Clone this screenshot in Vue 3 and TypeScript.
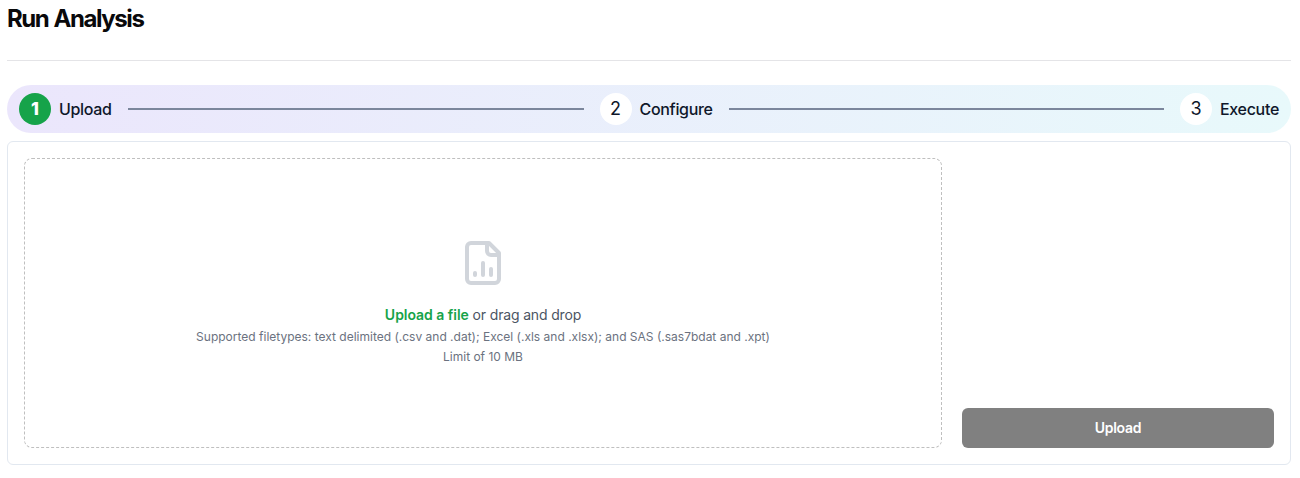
<script setup lang="ts">
interface Step {
  id: number
  label: string
  active: boolean
}

const steps: Step[] = [
  { id: 1, label: 'Upload', active: true },
  { id: 2, label: 'Configure', active: false },
  { id: 3, label: 'Execute', active: false },
]
</script>

<template>
  <main class="page">
    <h1 class="title">Run Analysis</h1>
    <div class="rule"></div>
    <nav class="stepper">
      <div v-for="(step, i) in steps" :key="step.id" class="step">
        <span class="num" :class="{ active: step.active }">{{ step.id }}</span>
        <span class="label">{{ step.label }}</span>
        <span v-if="i < steps.length - 1" class="line"></span>
      </div>
    </nav>
    <section class="panel">
      <div class="dropzone">
        <svg class="icon" viewBox="0 0 24 24" fill="none" stroke="currentColor" stroke-width="2" stroke-linecap="round" stroke-linejoin="round">
          <path d="M15 2H6a2 2 0 0 0-2 2v16a2 2 0 0 0 2 2h12a2 2 0 0 0 2-2V7Z" />
          <path d="M14 2v4a2 2 0 0 0 2 2h4" />
          <path d="M8 18v-1" />
          <path d="M12 18v-6" />
          <path d="M16 18v-3" />
        </svg>
        <p class="prompt"><span class="link">Upload a file</span> or drag and drop</p>
        <p class="hint">Supported filetypes: text delimited (.csv and .dat); Excel (.xls and .xlsx); and SAS (.sas7bdat and .xpt)</p>
        <p class="hint">Limit of 10 MB</p>
      </div>
      <div class="side">
        <button class="upload" type="button">Upload</button>
      </div>
    </section>
  </main>
</template>

<style>
body {
  background: #fff;
}
</style>

<style scoped>
* {
  box-sizing: border-box;
}
.page {
  height: 478px;
  padding: 0 9px 0 7px;
  font-family: Inter, sans-serif;
  color: #0f172a;
  overflow: hidden;
}
.title {
  margin: 0;
  padding-top: 3px;
  height: 60px;
  font-size: 24px;
  line-height: 32px;
  font-weight: 700;
  letter-spacing: -1.42px;
  word-spacing: 0.8px;
  color: #09090b;
}
.rule {
  height: 1px;
  background: #e4e4e7;
}
.stepper {
  display: flex;
  align-items: center;
  height: 48px;
  margin-top: 24px;
  padding: 0 12px;
  border-radius: 24px;
  background: linear-gradient(90deg, #ebe6fc, #e8f9fb);
}
.step {
  display: flex;
  align-items: center;
}
.step:not(:last-child) {
  flex: 1 1 0;
}
.num {
  width: 32px;
  height: 32px;
  margin-right: 8px;
  border-radius: 50%;
  background: #fff;
  text-align: center;
  font-size: 18px;
  line-height: 32px;
  font-weight: 400;
}
.num.active {
  background: #16a34a;
  color: #fff;
  font-weight: 800;
}
.label {
  font-size: 16px;
  line-height: 24px;
  font-weight: 500;
  letter-spacing: -0.31px;
  white-space: nowrap;
}
.line {
  flex: 1;
  height: 2px;
  margin: 0 16px;
  background: #7b869c;
}
.panel {
  display: flex;
  gap: 20px;
  height: 324px;
  margin-top: 8px;
  padding: 16px;
  border: 1px solid #e2e8f0;
  border-radius: 6px;
}
.dropzone {
  display: flex;
  flex-direction: column;
  align-items: center;
  width: 918px;
  height: 290px;
  padding-top: 80px;
  border: 1px dashed #bfbfbf;
  border-radius: 8px;
}
.icon {
  width: 48px;
  height: 48px;
  color: #d1d5db;
}
.prompt {
  margin: 16px 0 0;
  font-size: 14px;
  line-height: 24px;
  letter-spacing: -0.16px;
  color: #4b5563;
}
.link {
  font-weight: 600;
  letter-spacing: -0.03px;
  color: #16a34a;
}
.hint {
  margin: 0;
  font-size: 12px;
  line-height: 20px;
  color: #6b7280;
}
.side {
  display: flex;
  flex: 1;
  align-items: flex-end;
}
.upload {
  width: 100%;
  height: 40px;
  padding: 0 0 2px;
  border: 0;
  border-radius: 6px;
  background: #808080;
  color: #fff;
  font-family: inherit;
  font-size: 14px;
  font-weight: 600;
  letter-spacing: -0.25px;
}
</style>
